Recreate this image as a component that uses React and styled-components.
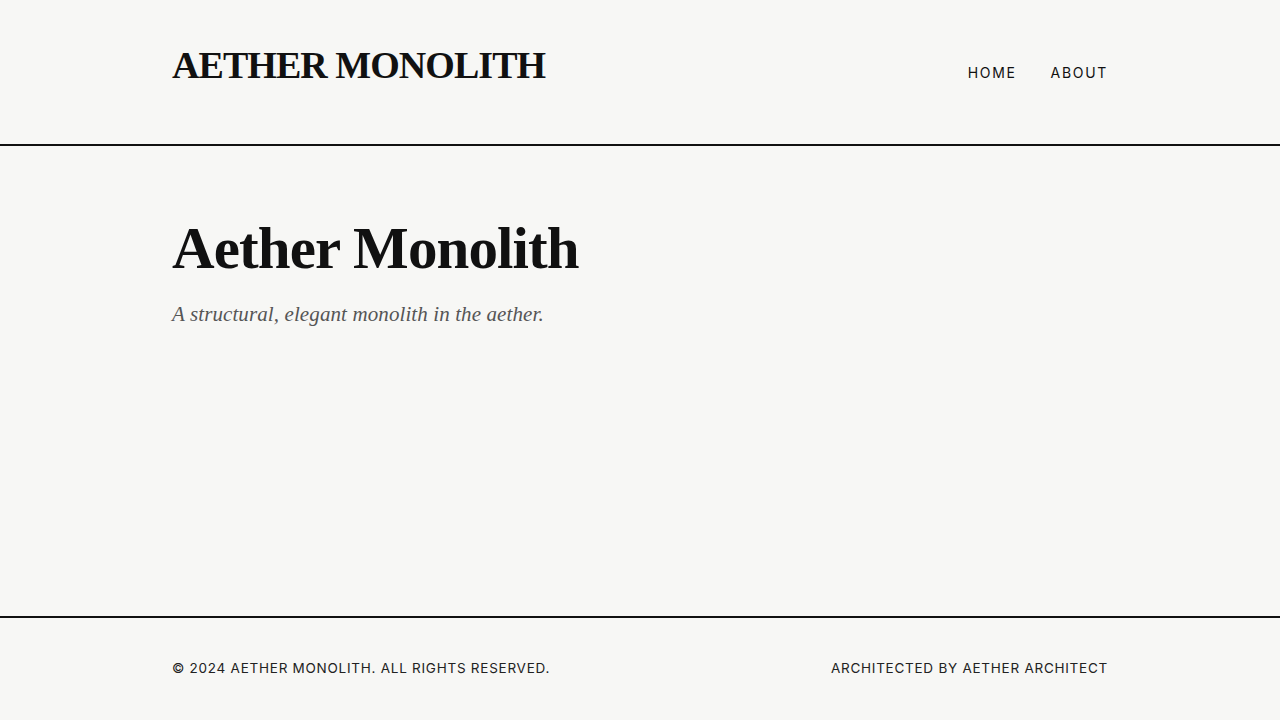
import styled, { createGlobalStyle } from "styled-components"

const GlobalStyle = createGlobalStyle`
    html, body {
        margin: 0;
        padding: 0;
        background: #f7f7f5;
        color: #111111;
    }
    * {
        box-sizing: border-box;
    }
`

const navItems = ["Home", "About"]

const App = () => {
    return (
        <>
            <GlobalStyle />
            <Page>
                <Header>
                    <Container>
                        <HeaderRow>
                            <Logo>AETHER MONOLITH</Logo>
                            <Nav>
                                {navItems.map(item => (
                                    <NavLink key={item} href="#">
                                        {item}
                                    </NavLink>
                                ))}
                            </Nav>
                        </HeaderRow>
                    </Container>
                </Header>
                <Main>
                    <Container>
                        <Title>Aether Monolith</Title>
                        <Subtitle>A structural, elegant monolith in the aether.</Subtitle>
                    </Container>
                </Main>
                <Footer>
                    <Container>
                        <FooterRow>
                            <FooterText>© 2024 Aether Monolith. All rights reserved.</FooterText>
                            <FooterText>Architected by Aether Architect</FooterText>
                        </FooterRow>
                    </Container>
                </Footer>
            </Page>
        </>
    )
}

export default App

const Page = styled.div`
    display: flex;
    flex-direction: column;
    min-height: 100vh;
`

const Container = styled.div`
    width: 100%;
    max-width: 936px;
    margin: 0 auto;
`

const Header = styled.header`
    height: 146px;
    border-bottom: 2px solid #111111;
    padding-top: 42px;
`

const HeaderRow = styled.div`
    display: flex;
    justify-content: space-between;
    align-items: flex-start;
`

const Logo = styled.h1`
    margin: 0;
    font-family: "Liberation Serif", serif;
    font-weight: 700;
    font-size: 38px;
    line-height: 46px;
    letter-spacing: -0.025em;
    color: #111111;
`

const Nav = styled.nav`
    display: flex;
    gap: 34px;
    padding-top: 21px;
`

const NavLink = styled.a`
    font-family: Inter, "Liberation Sans", sans-serif;
    font-size: 14px;
    font-weight: 400;
    line-height: 20px;
    letter-spacing: 0.12em;
    text-transform: uppercase;
    text-decoration: none;
    color: #111111;
`

const Main = styled.main`
    flex: 1;
    padding-top: 66px;
`

const Title = styled.h2`
    margin: 0;
    font-family: "Liberation Serif", serif;
    font-weight: 700;
    font-size: 59px;
    line-height: 72px;
    letter-spacing: -0.015em;
    color: #111111;
`

const Subtitle = styled.p`
    margin: 15px 0 0;
    font-family: "Liberation Serif", serif;
    font-style: italic;
    font-size: 21px;
    line-height: 30px;
    letter-spacing: 0.005em;
    color: #555555;
`

const Footer = styled.footer`
    height: 104px;
    border-top: 2px solid #111111;
    padding-top: 40px;
`

const FooterRow = styled.div`
    display: flex;
    justify-content: space-between;
    align-items: center;
`

const FooterText = styled.span`
    font-family: Inter, "Liberation Sans", sans-serif;
    font-size: 13.5px;
    line-height: 20px;
    letter-spacing: 0.055em;
    text-transform: uppercase;
    color: #222222;
`
